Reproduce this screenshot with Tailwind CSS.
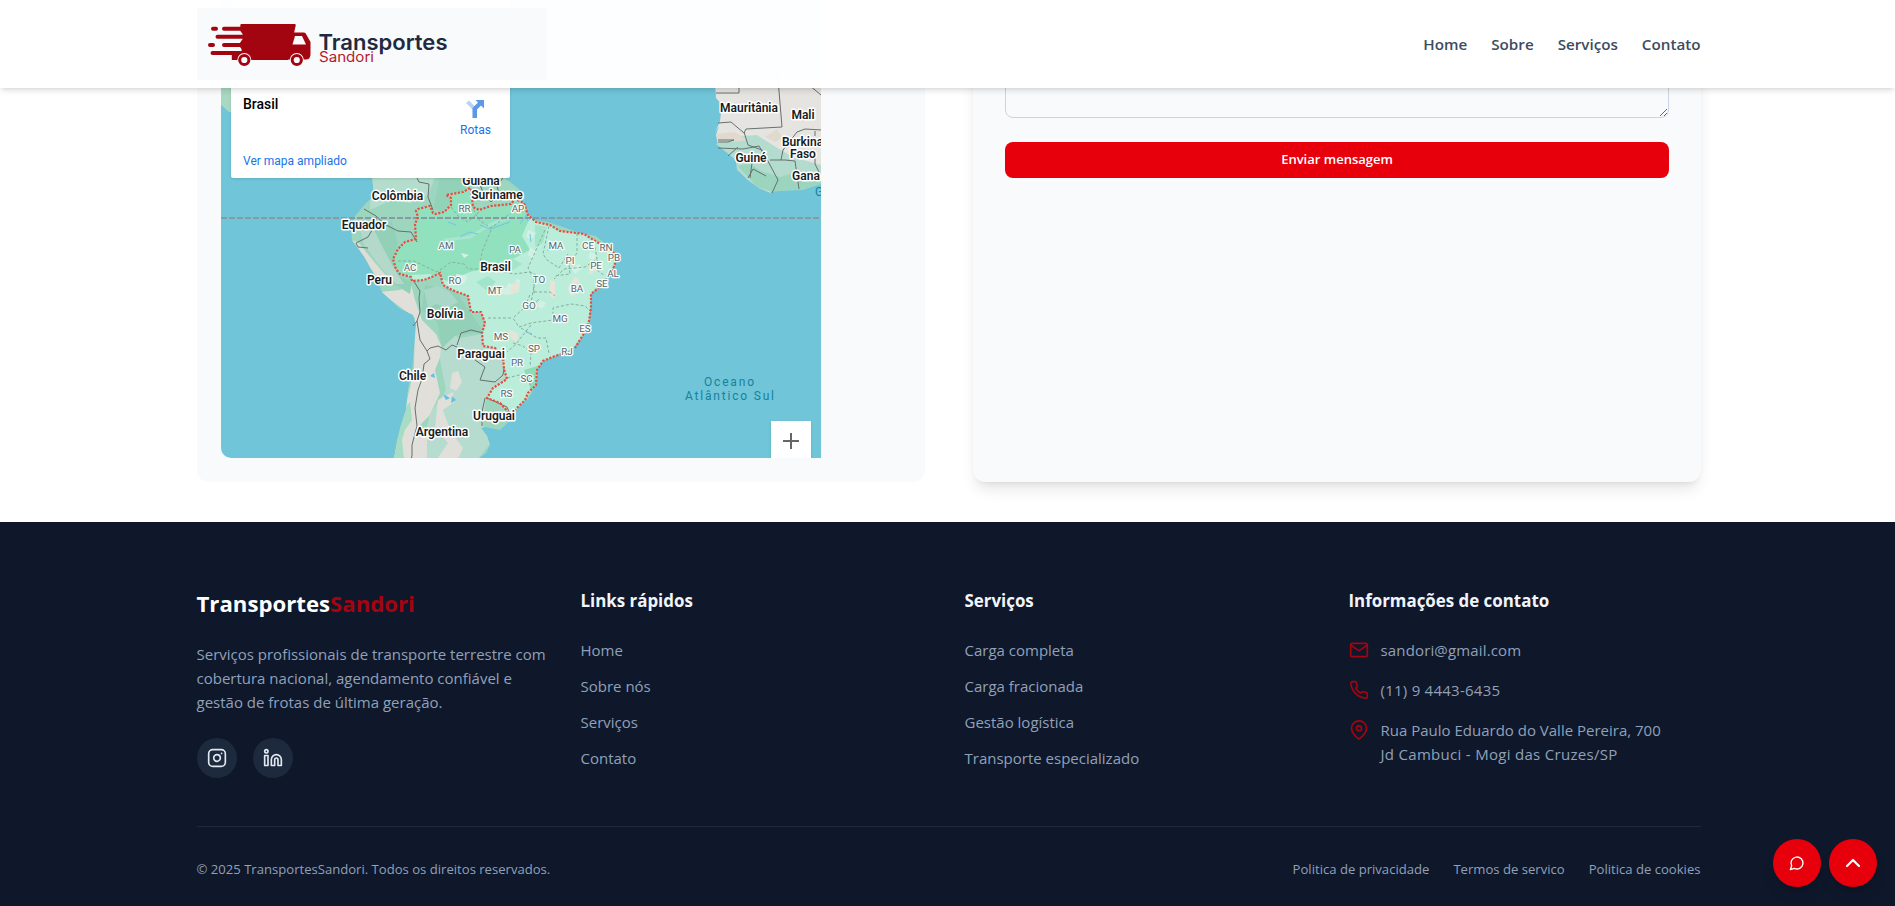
<!DOCTYPE html>
<html lang="pt-BR">
<head>
<meta charset="utf-8">
<title>Transportes Sandori</title>
<script src="https://cdn.jsdelivr.net/npm/@tailwindcss/browser@4"></script>
</head>
<body class="relative h-[906px] w-[1895px] overflow-hidden bg-white font-['Open_Sans',sans-serif] text-[15px]">
<header class="absolute inset-x-0 top-0 z-20 flex h-[88px] items-center bg-white/98 pl-[197px] shadow-md">
  <div class="flex w-[1503.5px] items-center justify-between">
    <svg class="h-18 w-[350px] shrink-0" viewBox="0 0 350 72">
      <rect width="350" height="72" fill="#f8fafc"/>
      <g stroke="#a30510" stroke-width="4" stroke-linecap="round">
        <path d="M16 20.700h3M27 20.700h20M20.500 28.700h27M13 37h3M27 37h20M15.500 45h28"/>
      </g>
      <path d="M43.500 16.500Q44 16 45 16H103.500Q105.500 16 105 17.500L96.500 52H34V45.500L43 45.500Q47 42 43 39V35L46 31V26L43.500 23Z" fill="#a30510" transform="matrix(0.9 0 0 1 4.200 0)"/>
      <path d="M96 24.500H107Q108.500 24.500 109 26L113.500 34V46Q113.500 51.500 109 51.500H89.500Z" fill="#a30510"/>
      <path d="M98 28H105L109 36.500H95.500Z" fill="#f8fafc"/>
      <g fill="#f8fafc" stroke="#f8fafc" stroke-width="2"><circle cx="47.300" cy="52" r="6"/><circle cx="99.800" cy="52" r="6"/></g>
      <g fill="#f8fafc" stroke="#a30510" stroke-width="3"><circle cx="47.300" cy="52" r="4.600"/><circle cx="99.800" cy="52" r="4.600"/></g>
      <text x="121.500" y="42" font-family="Inter" font-size="21.500" font-weight="600" fill="#1f2940" textLength="129" lengthAdjust="spacingAndGlyphs">Transportes</text>
      <text x="122" y="54" font-family="Inter" font-size="14" fill="#b51a2b" textLength="55" lengthAdjust="spacingAndGlyphs">Sandori</text>
    </svg>
    <nav class="flex gap-6 pt-px text-[15.2px] font-semibold text-[#3d4b60]"><a>Home</a><a>Sobre</a><a>Serviços</a><a>Contato</a></nav>
  </div>
</header>

<main class="flex h-[522px] gap-12 pl-[197px]">
  <section class="h-[482px] w-[728px] rounded-xl bg-slate-50 px-6 pb-6">
    <div class="relative h-[458px] w-[600px] overflow-hidden rounded-bl-[10px] bg-[#70c5d9]">
      <svg class="absolute left-0 top-0 h-[458px] w-[600px] font-['Roboto',sans-serif]" viewBox="221 0 600 458">
        <defs>
          <clipPath id="land"><path id="coast" d="M371 165L374 196 366 203 355 216 351 226 352 240 358 248 365 258 376 278 382 292 399 308 413 315 416 325 414 348 412 370 408 389 406 410 401 425 397 441 394 459H478L486 453 490 445 487 436 481 428 485 427 500 430 512 419 519 407 528 399 535 387 536 370 544 361 559 353 572 349 581 340 589 323 591 305 590 294 601 287 610 271 616 257 609 247 596 236 580 233 560 226 548 222 529 219 522 205 519 189 505 178 480 165Z"/></clipPath>
          <clipPath id="brazilClip"><path d="M470 188L463 192 446 195 451 198 451 205 444 212 436 214 433 213 430 206 418 209 416 211 418 217 415 224 416 239 405 242 398 249 393 259 396 269 400 274 411 277 412 281 424 280 434 276 440 273 443 285 452 290 468 296 471 312 481 312 485 323 482 333 483 346 495 348 503 356 504 369 507 379 493 388 487 398 500 403 512 416 518 407 525 400 536 385 537 370 543 361 572 349 583 335 589 321 591 294 609 275 615 265 614 253 600 244 584 234 560 231 550 225 536 222 528 215 524 203 515 199 511 204 491 206 479 210 473 207Z"/></clipPath>
        </defs>
        <use href="#coast" fill="#9cd6be"/>
        <g clip-path="url(#land)">
          <path d="M410 165H440L428 195 410 203 392 200 370 210 371 165Z" fill="#b4ddcd"/>
          <path d="M440 175L462 180 470 190 448 194 452 202 441 212 434 208Z" fill="#92d2b8"/>
          <path d="M380 292L400 290 411 284 415 300 422 320 436 334 443 350 435 370 440 393 430 415 415 430 413 459H393L402 425 407 400 414 370 415 318Z" fill="#e0dfda"/>
          <path d="M442 330L460 338 482 334 503 363 507 380 486 398 483 425 493 440 478 459H420L430 414 446 390 440 360Z" fill="#b5dccf"/>
          <path d="M376 218L392 222 398 244 392 260 400 276 412 282 410 294 394 284 382 262 372 242Z" fill="#93d0b8"/>
          <path d="M425 285L456 291 470 312 484 332 456 335 442 348 437 322 422 310Z" fill="#92d0b8"/>
          <path d="M424 290l14-4 12 6 8 10-10 6-12-4-8 4Z" fill="#a9d8c8"/>
          <path d="M452 373L458 371 462 382 456 391 450 388ZM438 400L453 392 454 402 443 410 450 430 463 448 458 459H437L448 443 435 428ZM414 432H427V459H411Z" fill="#e0dfda"/>
          <path d="M405 408L410 402 412 420 405 430 402 440 404 459H393L396 438Z" fill="#a8ddc5"/>
          <path d="M351 240L358 242 376 264 390 280 384 286 370 268Z" fill="#ddded6"/>
          <path d="M358 222L370 222 382 246 396 272 404 284 396 284 378 264 364 244Z" fill="#b4d8ca"/>
          <path d="M434 373l1 5-5-2M443 394l3 6 4-2M452 396l4 4-5 3Z" fill="#63bfe4"/>
        </g>
        <g clip-path="url(#brazilClip)">
          <path d="M390 180H620V420H390Z" fill="#baedda"/>
          <path d="M390 180H530L528 222 522 236 530 250 507 262 488 268 470 272 447 281 430 274 390 276Z" fill="#91e1bf"/>
          <path d="M535 225l12 2-4 16-8 4ZM476 282l12-6 8 6-10 8ZM500 262l12-4 10 6-12 8Z" fill="#a2e5cb"/>
          <path d="M444 240L470 237 491 224 509 218" fill="none" stroke="#a6e6cf" stroke-width="3"/>
          <g fill="#d3f0e5"><path d="M508 283l7 2 1-6 4 1-1 12-12 3-11-2 2-4 8-1ZM528 230l8 3-4 6-6-2ZM456 274l12 2-4 8-8-3ZM530 247l6 4-3 8-5-4ZM461 253l8 2-5 3ZM547 240l12 3-6 6ZM571 268l8-4 4 4-8 6ZM540 300l6 3-4 6-5-3ZM590 252l7 2-3 6-6-2Z"/></g>
          <g fill="#e6e4d7"><path d="M575 277l5 3-4 8 3 5-8 3-4-8ZM550 280l5 2v17l-5-3ZM509 329l9 5-1 9-6-5ZM589 268l7-4 3 5-10 6ZM512 284l7-2-1 10-8 3Z"/></g>
          <g fill="none" stroke="#6fc6e4"><path d="M460 237l9-5 9 2M480 225l10 4 20-7M530 234l1 8M534 304l5-5M550 241l-2 10M520 224l6-9 2 6 6-6M448 222l8 3M526 332l6 2"/></g>
          <path d="M524 370L541 365 538 385 532 392 528 380Z" fill="#8fdcb9"/>
        </g>
        <path d="M221 67H231L236 113 229 112 221 105Z" fill="#a7d8c2"/>
        <path d="M715 80H822V183L801 190 789 189 770 190 771 193 759 188 747 179 739 171 736 161 728 151 718 145 716 135 719 126 715 133 720 121 722 105 716 98Z" fill="#e5e4e1"/>
        <path d="M716 144L727 139 744 136 757 135 779 149 795 158 822 165V183L802 190 770 191 758 187 737 170 736 160Z" fill="#b3dcce"/>
        <path d="M738 166L749 163 761 171 780 177 799 171 822 176V184L801 190H788L771 192 757 187Z" fill="#9cd5be"/>
        <path d="M716 134l18-2 14 8-16 2-14-1ZM765 137l12-8 5 8-6 5Z" fill="#e0d9ce"/>
        <g fill="none" stroke="#66716e" stroke-width="1">
          <path d="M401 171l14 3 4 8 10 2-1 13 5 13M364 209l12 7 10 9 12 6 13 1 6 10M384 222l-10 5-6 10-12 6 2 4 10 1M413 280l7 11-1 7 1 14-3 9 3 19 7 11 3-3 8-2 8 4 6-5 5 2M457 345l4-12 10-3 12 3M427 351l3 8-6 5-2 15-4 11-3 18 2 18-5 19 0 10-3 17M417 321l-4 5M475 360l10 7-5 13 15 2 8-7 1-7M485 398l-3 14 0 14M487 398l20 9 3 7M481 172l-4 6 6 14 8 10 8-8-2-8 8-11"/>
          <path d="M716 93H739V67M777 67l5 60-36 2-2 4-13-11-13 1M744 132l4 13 14 5 16 30-6 13M718 140h16l-6 2h-10M718 148l25 1 16-3 8 14M728 156l10-9M752 163l-2 15M748 178l5-9 13 7M770 160l15 0 10 1 4 28M781 160l2-10 14-18 8-3 17 1M815 131v5M809 85l12 10M815 152v12l4 8"/>
        </g>
        <g fill="none" stroke="#87afa0" stroke-dasharray="3 2"><path d="M398 261l16 0 23 11 14-10 13 2 4 5h22l24 5 16-2 6 3-5 28 2 7M451 207l7 9 10 6 11-10M471 205l8 15 12 8 24-18M491 230l-9 22-2 12 9 6M545 230l-9 20-8 18 6 12 0 15M549 226l-6 28 4 6 12 8 9-14M577 233v20l-8 11 1 10-16 2M595 247l2 12-12 8-21 2-10 10M597 260l6 8M597 270l8 6M534 292h16l5 4M530 295l-6 13-11 10 6 9 12-4 22-3 0-12 18-4 14 2 8 8M488 318h23M521 328l16 10 9 0 3 15M531 325l-16 20-8 7M513 343l10 3 8 7-1 14M507 378l12-3 14 2M528 378l4 14"/></g>
        <path d="M221 218H821" stroke="#8799a3" stroke-width="2" stroke-dasharray="6 2"/>
        <path d="M470 188L463 192 446 195 451 198 451 205 444 212 436 214 433 213 430 206 418 209 416 211 418 217 415 224 416 239 405 242 398 249 393 259 396 269 400 274 411 277 412 281 424 280 434 276 440 273 443 285 452 290 468 296 471 312 481 312 485 323 482 333 483 346 495 348 503 356 504 369 507 379 493 388 487 398 500 403 512 416M471 189L473 207 479 210 491 206 511 204 515 199 524 203 528 215 536 222 550 225 560 231 584 234 600 244 614 253 615 265 609 275 602 285 591 294 591 308 589 321 583 335 575 348M569 352L555 356 543 361 537 370 536 385 528 393 525 400 518 407 511 415" fill="none" stroke="#e84d3f" stroke-width="2.200" stroke-dasharray="2.200 1.500"/>
        <g font-size="12" font-weight="600" fill="#171c22" stroke="#fff" stroke-width="3" stroke-linejoin="round" paint-order="stroke" text-anchor="middle">
          <text x="481" y="185">Guiana</text><text x="397.500" y="200">Colômbia</text><text x="497" y="199">Suriname</text><text x="364" y="229">Equador</text><text x="495.500" y="271">Brasil</text><text x="379.500" y="284">Peru</text><text x="445" y="318">Bolívia</text><text x="481" y="358">Paraguai</text><text x="412.500" y="380">Chile</text><text x="494" y="420">Uruguai</text><text x="442" y="436">Argentina</text><text x="749" y="112">Mauritânia</text><text x="803" y="119">Mali</text><text x="802.500" y="146">Burkina</text><text x="803" y="158">Faso</text><text x="751" y="162">Guiné</text><text x="806" y="180">Gana</text>
        </g>
        <g font-size="9.800" fill="#54666a" stroke="#f6fcf9" stroke-width="2.500" stroke-linejoin="round" paint-order="stroke" text-anchor="middle">
          <text x="464.500" y="212">RR</text><text x="518" y="212">AP</text><text x="446" y="249">AM</text><text x="515" y="253">PA</text><text x="556" y="249">MA</text><text x="588" y="249">CE</text><text x="606" y="251">RN</text><text x="614" y="261">PB</text><text x="570" y="264">PI</text><text x="596" y="269">PE</text><text x="613" y="277">AL</text><text x="602" y="287">SE</text><text x="410" y="271">AC</text><text x="455" y="284">RO</text><text x="539" y="283">TO</text><text x="495" y="294">MT</text><text x="577" y="292">BA</text><text x="529" y="309">GO</text><text x="560" y="322">MG</text><text x="585" y="332">ES</text><text x="501" y="340">MS</text><text x="534" y="352">SP</text><text x="567" y="355">RJ</text><text x="517" y="366">PR</text><text x="526.500" y="382">SC</text><text x="506.500" y="397">RS</text>
        </g>
        <g font-size="12" fill="#16829a"><text x="704" y="386" textLength="50">Oceano</text><text x="685" y="400" textLength="89">Atlântico Sul</text><text x="815" y="196">G</text></g>
      </svg>
      <div class="absolute left-[10px] top-0 h-[178px] w-[279px] rounded-b-xs bg-white font-['Roboto',sans-serif] shadow-sm">
        <span class="absolute left-3 top-[94px] text-sm font-medium text-black">Brasil</span>
        <svg class="absolute left-[235px] top-[100px] h-[18px] w-[18px]" viewBox="0 0 18 18"><path d="M0 3L3 0.500L9 6.500L7 10Z" fill="#b9d3f4"/><path d="M9.500 0h8.500v8.500l-3-3-4 4V18H6.500V8l5.500-5.500Z" fill="#5c98e6"/></svg>
        <span class="absolute left-[229px] top-[122px] text-xs text-[#1a73e8]">Rotas</span>
        <span class="absolute left-3 top-[153px] text-xs text-[#1a73e8]">Ver mapa ampliado</span>
      </div>
      <div class="absolute left-[550px] top-[421px] grid h-10 w-10 place-items-center bg-white shadow-sm"><svg class="h-4 w-4" viewBox="0 0 16 16" stroke="#666" stroke-width="2"><path d="M8 0v16M0 8h16"/></svg></div>
    </div>
  </section>
  <section class="h-[482px] w-[728px] rounded-xl bg-slate-50 px-8 shadow-lg">
    <textarea class="block h-[118px] w-full rounded-lg border border-slate-300"></textarea>
    <button class="mt-6 block h-9 w-full rounded-lg bg-[#e7000b] text-[13px] font-semibold text-white">Enviar mensagem</button>
  </section>
</main>

<footer class="h-[384px] bg-slate-900 pl-[196.5px] pt-16 text-slate-400">
  <div class="grid h-[240px] w-[1504px] grid-cols-4 gap-8">
    <div>
      <h2 class="pt-0.5 text-[22.200px] font-bold leading-8 text-white">Transportes<span class="text-[#a30510]">Sandori</span></h2>
      <p class="mt-[22px] whitespace-nowrap leading-6">Serviços profissionais de transporte terrestre com<br>cobertura nacional, agendamento confiável e<br>gestão de frotas de última geração.</p>
      <div class="mt-6 flex gap-4">
        <a class="grid size-10 place-items-center rounded-full bg-slate-800 text-slate-200"><svg class="size-5" viewBox="0 0 24 24" fill="none" stroke="currentColor" stroke-width="2" stroke-linecap="round" stroke-linejoin="round"><rect width="20" height="20" x="2" y="2" rx="5"/><path d="M16 11.370A4 4 0 1 1 12.630 8 4 4 0 0 1 16 11.370z"/><path d="M17.500 6.500h.01"/></svg></a>
        <a class="grid size-10 place-items-center rounded-full bg-slate-800 text-slate-200"><svg class="size-5" viewBox="0 0 24 24" fill="none" stroke="currentColor" stroke-width="2" stroke-linecap="round" stroke-linejoin="round"><path d="M16 8a6 6 0 0 1 6 6v7h-4v-7a2 2 0 0 0-4 0v7h-4v-7a6 6 0 0 1 6-6z"/><rect width="4" height="12" x="2" y="9"/><circle cx="4" cy="4" r="2"/></svg></a>
      </div>
    </div>
    <div><h3 class="pt-px text-[16.900px] font-bold leading-7 text-slate-100">Links rápidos</h3><div class="mt-[23px] flex flex-col gap-3 leading-6"><a>Home</a><a>Sobre nós</a><a>Serviços</a><a>Contato</a></div></div>
    <div><h3 class="pt-px text-[16.900px] font-bold leading-7 text-slate-100">Serviços</h3><div class="mt-[23px] flex flex-col gap-3 leading-6"><a>Carga completa</a><a>Carga fracionada</a><a>Gestão logística</a><a>Transporte especializado</a></div></div>
    <div><h3 class="pt-px text-[16.900px] font-bold leading-7 text-slate-100">Informações de contato</h3>
      <div class="mt-[23px] flex flex-col gap-4 leading-6">
        <div class="flex gap-3"><svg class="mt-0.5 size-5 shrink-0 text-[#a30510]" viewBox="0 0 24 24" fill="none" stroke="currentColor" stroke-width="2" stroke-linecap="round" stroke-linejoin="round"><rect width="20" height="16" x="2" y="4" rx="2"/><path d="m22 6-10 7L2 6"/></svg><span class="tracking-[0.15px]">sandori@gmail.com</span></div>
        <div class="flex gap-3"><svg class="mt-0.5 size-5 shrink-0 text-[#a30510]" viewBox="0 0 24 24" fill="none" stroke="currentColor" stroke-width="2" stroke-linecap="round" stroke-linejoin="round"><path d="M22 16.920v3a2 2 0 0 1-2.180 2 19.790 19.790 0 0 1-8.630-3.070 19.500 19.500 0 0 1-6-6 19.790 19.790 0 0 1-3.070-8.670A2 2 0 0 1 4.110 2h3a2 2 0 0 1 2 1.720 12.840 12.840 0 0 0 .7 2.810 2 2 0 0 1-.45 2.110L8.090 9.910a16 16 0 0 0 6 6l1.270-1.270a2 2 0 0 1 2.110-.45 12.840 12.840 0 0 0 2.810.7A2 2 0 0 1 22 16.920z"/></svg><span class="tracking-[0.25px]">(11) 9 4443-6435</span></div>
        <div class="flex gap-3"><svg class="mt-0.5 size-5 shrink-0 text-[#a30510]" viewBox="0 0 24 24" fill="none" stroke="currentColor" stroke-width="2" stroke-linecap="round" stroke-linejoin="round"><path d="M21 10c0 7-9 13-9 13s-9-6-9-13a9 9 0 0 1 18 0z"/><circle cx="12" cy="10" r="3"/></svg><span class="whitespace-nowrap">Rua Paulo Eduardo do Valle Pereira, 700<br><span class="tracking-[0.3px]">Jd Cambuci - Mogi das Cruzes/SP</span></span></div>
      </div>
    </div>
  </div>
  <div class="flex w-[1504px] justify-between border-t border-slate-800 pt-8 text-[13.100px] leading-5"><span>© 2025 TransportesSandori. Todos os direitos reservados.</span><div class="flex gap-6"><a>Politica de privacidade</a><a>Termos de servico</a><a>Politica de cookies</a></div></div>
</footer>
<div class="absolute left-[1773px] top-[839px] z-30 flex gap-2 text-white">
  <a class="grid size-12 place-items-center rounded-full bg-[#e7000b] shadow-lg"><svg class="size-4" viewBox="0 0 24 24" fill="none" stroke="currentColor" stroke-width="2" stroke-linecap="round" stroke-linejoin="round"><path d="M7.900 20A9 9 0 1 0 4 16.100L2 22Z"/></svg></a>
  <a class="grid size-12 place-items-center rounded-full bg-[#e7000b] shadow-lg"><svg class="size-6" viewBox="0 0 24 24" fill="none" stroke="currentColor" stroke-width="2.200" stroke-linecap="round" stroke-linejoin="round"><path d="m18 15-6-6-6 6"/></svg></a>
</div>
</body>
</html>
